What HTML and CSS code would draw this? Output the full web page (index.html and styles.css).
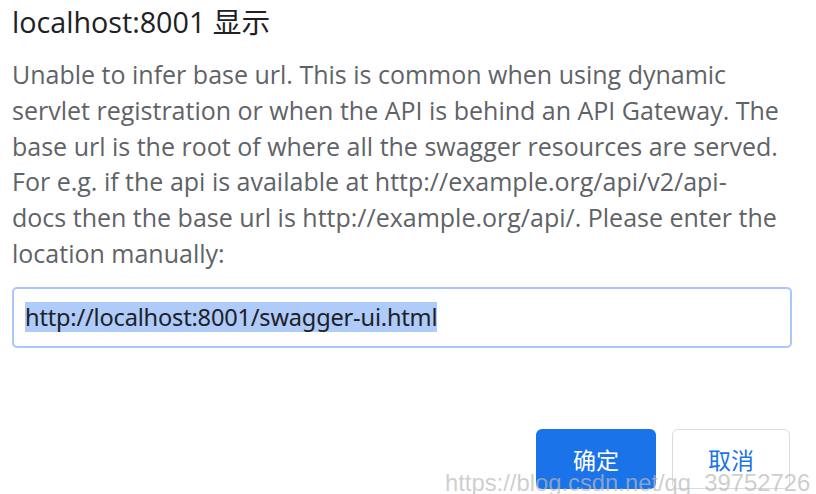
FILE: index.html
```html
<!DOCTYPE html>
<html lang="zh-CN">
<head>
<meta charset="utf-8">
<link rel="stylesheet" href="styles.css">
</head>
<body>
<div class="dialog">
  <h1 class="title">localhost:8001 显示</h1>
  <p class="message">Unable to infer base url. This is common when using dynamic<br>servlet registration or when the API is behind an API Gateway. The<br>base url is the root of where all the swagger resources are served.<br>For e.g. if the api is available at http://example.org/api/v2/api-<br>docs then the base url is http://example.org/api/. Please enter the<br>location manually:</p>
  <div class="field"><span class="sel">http://localhost:8001/swagger-ui.html</span></div>
  <div class="actions">
    <button class="btn primary">确定</button>
    <button class="btn secondary">取消</button>
  </div>
  <div class="watermark">https://blog.csdn.net/qq_39752726</div>
</div>
</body>
</html>
```
FILE: styles.css
```css
html, body {
  margin: 0;
  padding: 0;
  background: #fff;
}
body {
  width: 816px;
  height: 494px;
  overflow: hidden;
  font-family: "Open Sans", "Noto Sans CJK SC", sans-serif;
}
.dialog {
  position: relative;
  padding: 2px 0 0 12px;
  width: 790px;
  height: 492px;
}
.title {
  margin: 0;
  font-size: 28.7px;
  font-weight: 400;
  line-height: 40px;
  color: #202124;
}
.message {
  margin: 15px 0 0 0;
  white-space: nowrap;
  font-size: 25px;
  line-height: 35.8px;
  color: #5f6368;
}
.field {
  margin-top: 15px;
  width: 780px;
  height: 61px;
  box-sizing: border-box;
  border: 2px solid #a8c7fa;
  border-radius: 5px;
  padding: 0 0 0 11px;
  display: flex;
  align-items: center;
  font-family: "Noto Sans", "Open Sans", sans-serif;
  font-size: 23.6px;
  color: #202124;
}
.sel {
  background: #aecbfa;
  line-height: 30px;
  letter-spacing: -0.2px;
}
.actions {
  display: flex;
  justify-content: flex-end;
  gap: 16px;
  margin-top: 81px;
  width: 778px;
}
.btn {
  width: 120px;
  height: 60px;
  border-radius: 6px;
  font-family: "Noto Sans CJK SC", sans-serif;
  font-size: 23px;
  padding: 0;
  box-sizing: border-box;
}
.primary {
  background: #1a73e8;
  border: none;
  color: #fff;
}
.secondary {
  background: #fff;
  border: 1px solid #dadce0;
  color: #1a73e8;
  width: 118px;
}
.watermark {
  position: absolute;
  left: 445px;
  top: 469px;
  font-family: "Liberation Sans", sans-serif;
  font-size: 23.8px;
  color: rgba(185, 185, 185, 0.7);
  white-space: nowrap;
}
```
